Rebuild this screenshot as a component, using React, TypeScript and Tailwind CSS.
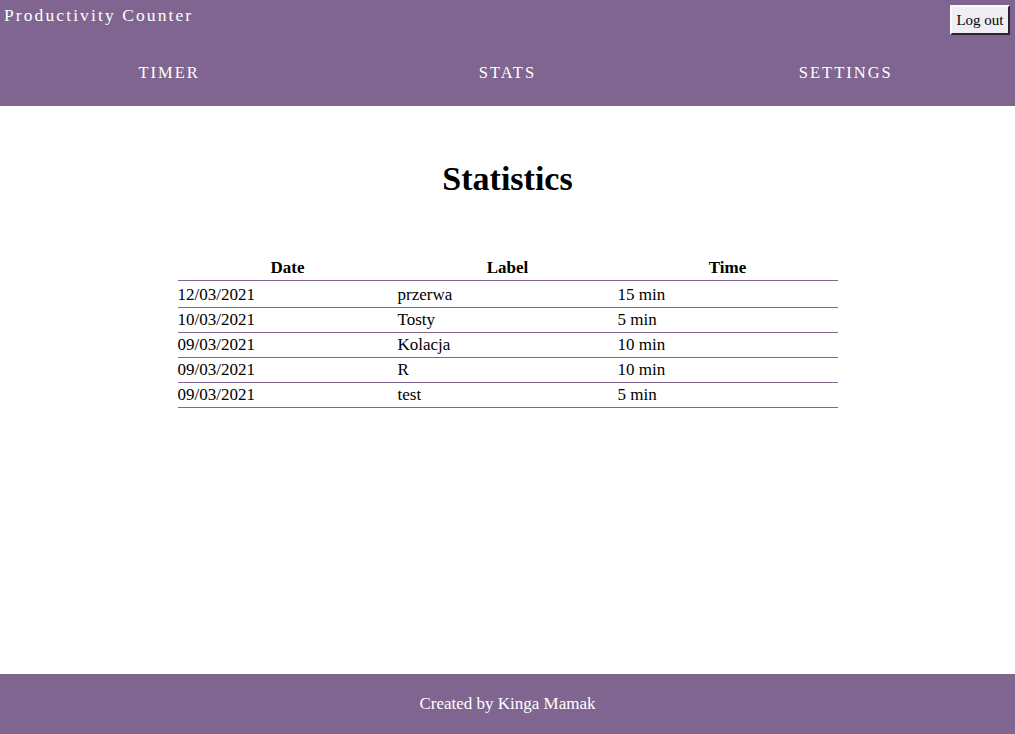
const rows = [
  { date: "12/03/2021", label: "przerwa", time: "15 min" },
  { date: "10/03/2021", label: "Tosty", time: "5 min" },
  { date: "09/03/2021", label: "Kolacja", time: "10 min" },
  { date: "09/03/2021", label: "R", time: "10 min" },
  { date: "09/03/2021", label: "test", time: "5 min" },
];

const navItems = ["TIMER", "STATS", "SETTINGS"];

export default function App() {
  return (
    <div className="flex min-h-screen flex-col bg-white text-black font-['Georgia','Liberation_Serif',serif]">
      <header className="bg-[#7f6590] text-white">
        <div className="flex h-[40px] items-start justify-between">
          <h3 className="pl-[4px] pt-[2px] text-[17.5px] tracking-[2.1px]">Productivity Counter</h3>
          <button className="mr-[5px] mt-[5px] h-[30px] w-[60px] border-2 border-t-[#fbfbff] border-l-[#fbfbff] border-r-[#2e2233] border-b-[#2e2233] bg-[#efeef5] text-[15px] text-black">
            Log out
          </button>
        </div>
        <nav className="grid h-[66px] grid-cols-3 items-start">
          {navItems.map((item) => (
            <a key={item} href="#" className="pt-[21px] text-center text-[16.5px] tracking-[2px]">
              {item}
            </a>
          ))}
        </nav>
      </header>

      <main className="flex-1">
        <h1 className="mt-[47px] text-center text-[34px] font-bold">Statistics</h1>
        <table className="mx-auto mt-[51px] w-[660px] border-collapse text-[17px]">
          <thead>
            <tr className="border-b border-[#7f6590]">
              <th className="h-[25px] w-1/3 p-0 text-center font-bold leading-[25px]">Date</th>
              <th className="h-[25px] w-1/3 p-0 text-center font-bold leading-[25px]">Label</th>
              <th className="h-[25px] w-1/3 p-0 text-center font-bold leading-[25px]">Time</th>
            </tr>
          </thead>
          <tbody>
            {rows.map((r, i) => (
              <tr key={i} className="border-b border-[#7f6590]">
                <td className={i === 0 ? "p-0 pt-[2px] leading-[24px]" : "p-0 leading-[24px]"}>{r.date}</td>
                <td className={i === 0 ? "p-0 pt-[2px] leading-[24px]" : "p-0 leading-[24px]"}>{r.label}</td>
                <td className={i === 0 ? "p-0 pt-[2px] leading-[24px]" : "p-0 leading-[24px]"}>{r.time}</td>
              </tr>
            ))}
          </tbody>
        </table>
      </main>

      <footer className="flex h-[60px] items-center justify-center bg-[#7f6590] text-[17px] text-white">
        Created by Kinga Mamak
      </footer>
    </div>
  );
}
